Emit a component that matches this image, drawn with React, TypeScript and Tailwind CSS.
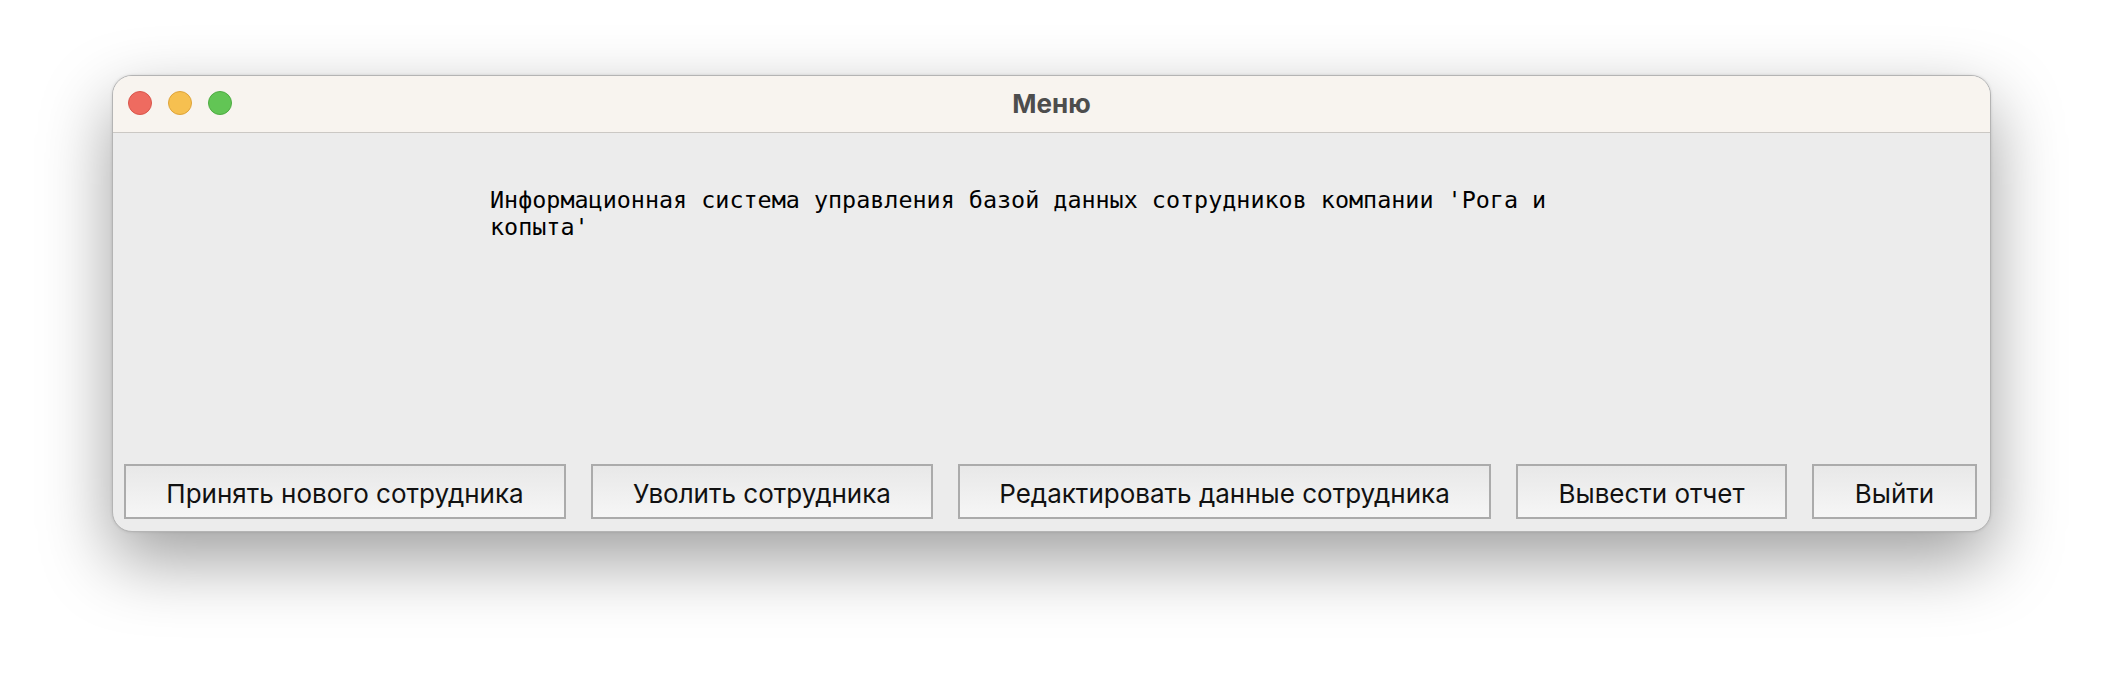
export default function App() {
  const buttons = [
    { label: "Принять нового сотрудника", w: "w-[442px]" },
    { label: "Уволить сотрудника", w: "w-[342px]" },
    { label: "Редактировать данные сотрудника", w: "w-[533px]" },
    { label: "Вывести отчет", w: "w-[271px]" },
    { label: "Выйти", w: "w-[165px]" },
  ]

  return (
    <div className="w-[2102px] h-[680px] bg-white pl-[112px] pt-[75px] overflow-hidden">
      {/* Window */}
      <div className="w-[1879px] h-[457px] rounded-[20px] border border-[#b4b4b4] bg-[#ececec] flex flex-col overflow-hidden shadow-[0_28px_70px_rgba(0,0,0,0.38),0_0_3px_rgba(0,0,0,0.12)]">
        {/* Title bar */}
        <div className="relative h-[57px] shrink-0 bg-[#f8f4ef] border-b border-[#cbc8c4] flex items-center justify-center">
          <div className="absolute left-[15px] top-[15px] flex gap-[16px]">
            <span className="w-[24px] h-[24px] rounded-full bg-[#ee6b60] border border-[#d9554b]" />
            <span className="w-[24px] h-[24px] rounded-full bg-[#f6c050] border border-[#dea33a]" />
            <span className="w-[24px] h-[24px] rounded-full bg-[#62c555] border border-[#4eab42]" />
          </div>
          <span className="text-[26px] font-bold text-[#4d4d4d] font-['Inter','Liberation_Sans',Arial,sans-serif] leading-none">
            Меню
          </span>
        </div>

        {/* Body */}
        <div className="flex-1 flex flex-col justify-between pt-[54px] pb-[12px] pl-[11px]">
          <div className="pl-[366px]">
            <p className="w-[1100px] text-[23.4px] leading-[27px] text-black font-['DejaVu_Sans_Mono',monospace]">
              Информационная система управления базой данных сотрудников компании 'Рога и копыта'
            </p>
          </div>

          {/* Buttons */}
          <div className="flex gap-[25px]">
            {buttons.map((b) => (
              <button
                key={b.label}
                className={`${b.w} h-[55px] border-2 border-[#ababab] bg-gradient-to-b from-[#e8e8e8] to-[#f6f6f6] pt-[4px] text-[26px] text-[#111] font-['Inter','Liberation_Sans',Arial,sans-serif] flex items-center justify-center`}
              >
                {b.label}
              </button>
            ))}
          </div>
        </div>
      </div>
    </div>
  )
}
